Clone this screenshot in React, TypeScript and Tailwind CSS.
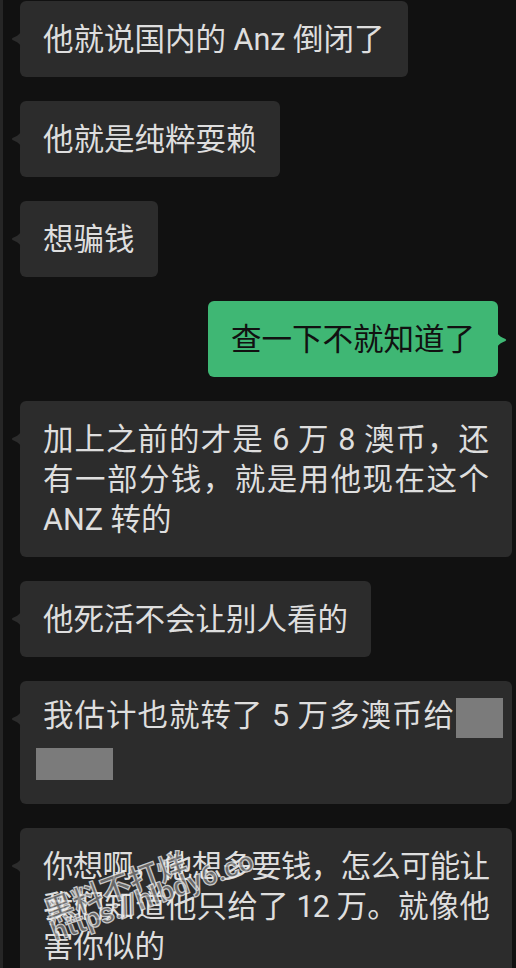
import React from "react";

const LeftTail = () => (
  <svg className="absolute -left-[9px] top-[29px]" width="10" height="18" viewBox="0 0 10 18">
    <path d="M10 0 C10 4 6 6 1.5 8 Q0 9 1.5 10 C6 12 10 14 10 18 Z" fill="#2c2c2c" />
  </svg>
);

const RightTail = () => (
  <svg className="absolute -right-[9px] top-[30px]" width="10" height="18" viewBox="0 0 10 18">
    <path d="M0 0 C0 4 4 6 8.5 8 Q10 9 8.5 10 C4 12 0 14 0 18 Z" fill="#3fb774" />
  </svg>
);

const Bubble = ({ children, wide = false, pad = "pt-[19px] pb-[17px]" }: { children: React.ReactNode; wide?: boolean; pad?: string }) => (
  <div className={`relative rounded-[6px] bg-[#2c2c2c] px-[23px] text-[#dedede] ${pad} ${wide ? "w-[492px]" : "self-start"}`}>
    <LeftTail />
    {children}
  </div>
);

// justified line (all but the last line of a wrapped message)
const Line = ({ children, tight = false }: { children: React.ReactNode; tight?: boolean }) => (
  <div className={`whitespace-nowrap text-justify [text-align-last:justify] ${tight ? "tracking-[-1px]" : ""}`}>{children}</div>
);

const App: React.FC = () => {
  return (
    <div className="relative flex h-[968px] w-full overflow-hidden bg-[#111111] font-[Roboto,'Noto_Sans_CJK_SC',sans-serif] text-[30.5px] leading-[40px]">
      <div className="w-[3px] shrink-0 bg-[#262626]" />

      <div className="flex min-w-0 flex-1 flex-col gap-[24px] pl-[17px] pt-px">
        <Bubble>他就说国内的 Anz 倒闭了</Bubble>
        <Bubble>他就是纯粹耍赖</Bubble>
        <Bubble>想骗钱</Bubble>

        {/* outgoing */}
        <div className="flex justify-end pr-[18px]">
          <div className="relative rounded-[6px] bg-[#3fb774] px-[23px] pt-[19px] pb-[17px] text-[#111111]">
            <RightTail />
            查一下不就知道了
          </div>
        </div>

        <Bubble wide>
          <Line>加上之前的才是 6 万 8 澳币，还</Line>
          <Line>有一部分钱，就是用他现在这个</Line>
          <div>ANZ 转的</div>
        </Bubble>

        <Bubble>他死活不会让别人看的</Bubble>

        <Bubble wide pad="pt-[15px] pb-[16px]">
          <div className="flex items-start">
            <span className="w-[411px] shrink-0 whitespace-nowrap text-justify [text-align-last:justify]">我估计也就转了 5 万多澳币给</span>
            <span className="ml-[2px] mt-[2px] h-[40px] w-[47px] shrink-0 bg-[#7b7b7b]" />
          </div>
          <div className="h-[40px]">
            <div className="-ml-[7px] mt-[10px] h-[32px] w-[77px] bg-[#7b7b7b]" />
          </div>
        </Bubble>

        <Bubble wide>
          <Line tight>你想啊，他想多要钱，怎么可能让</Line>
          <Line tight>我们知道他只给了 12 万。就像他</Line>
          <div>害你似的</div>
        </Bubble>
      </div>

      {/* watermark */}
      <div className="pointer-events-none absolute left-[42px] top-[905px] origin-top-left -rotate-[20deg] font-bold leading-[20px] text-[#7a7a7a]/80 [-webkit-text-stroke:1.2px_rgba(255,255,255,0.7)]">
        <div className="text-[30px]">黑料不打烊</div>
        <div className="text-[28px]">https://hlbdy6.co</div>
      </div>
    </div>
  );
};

export default App;
